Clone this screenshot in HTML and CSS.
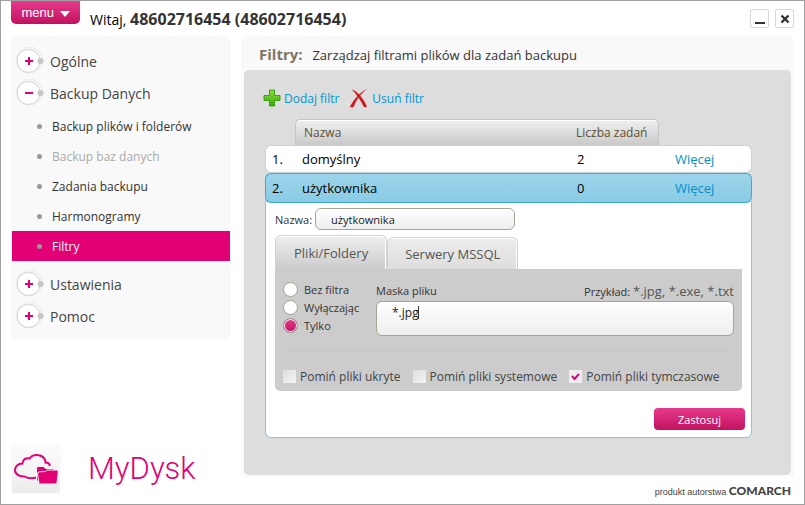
FILE: index.html
```html
<!DOCTYPE html>
<html lang="pl">
<head>
    <meta charset="UTF-8">
    <meta name="viewport" content="width=device-width, initial-scale=1.0">
    <title>MyDysk - Filtry</title>
    <link rel="stylesheet" href="styles.css">
</head>
<body>

    <div class="window">
        <header class="titlebar">
            <button type="button" class="menu-btn">menu
                <svg width="10" height="6" viewBox="0 0 10 6"><path d="M0 0h10L5 6z" fill="#fff"/></svg>
            </button>
            <p class="welcome">Witaj, <strong>48602716454 (48602716454)</strong></p>
            <div class="window-controls">
                <button type="button" aria-label="Minimalizuj">
                    <svg width="12" height="12" viewBox="0 0 12 12"><path d="M1 10h10" stroke="#333" stroke-width="2"/></svg>
                </button>
                <button type="button" aria-label="Zamknij">
                    <svg width="12" height="12" viewBox="0 0 12 12"><path d="M2.500 2.500l7 7M9.500 2.500l-7 7" stroke="#333" stroke-width="2.400"/></svg>
                </button>
            </div>
        </header>

        <div class="layout">
            <aside class="side">
                <nav class="sidebar">
                    <button type="button" class="group">
                        <svg class="knob" width="30" height="28" viewBox="0 0 30 28"><use href="#knob"/><path d="M10 14h8M14 10v8" stroke="#e20074" stroke-width="2"/></svg>
                        Ogólne
                    </button>
                    <button type="button" class="group" aria-expanded="true">
                        <svg class="knob" width="30" height="28" viewBox="0 0 30 28"><use href="#knob"/><path d="M10 14h8" stroke="#e20074" stroke-width="2"/></svg>
                        Backup Danych
                    </button>
                    <ul class="subnav">
                        <li><a href="#">Backup plików i folderów</a></li>
                        <li class="disabled"><a href="#">Backup baz danych</a></li>
                        <li><a href="#">Zadania backupu</a></li>
                        <li><a href="#">Harmonogramy</a></li>
                        <li class="active"><a href="#">Filtry</a></li>
                    </ul>
                    <button type="button" class="group">
                        <svg class="knob" width="30" height="28" viewBox="0 0 30 28"><use href="#knob"/><path d="M10 14h8M14 10v8" stroke="#e20074" stroke-width="2"/></svg>
                        Ustawienia
                    </button>
                    <button type="button" class="group">
                        <svg class="knob" width="30" height="28" viewBox="0 0 30 28"><use href="#knob"/><path d="M10 14h8M14 10v8" stroke="#e20074" stroke-width="2"/></svg>
                        Pomoc
                    </button>
                </nav>

                <div class="brand">
                    <span class="brand-tile">
                        <svg width="48" height="48" viewBox="0 0 48 48">
                            <path d="M25 32.500C20 33.800 16 33.500 12.500 31.500C7 32 3 29 3 25C3 21.500 6 18.500 10.500 18.500C10.500 14.500 14 12.500 17.500 13.500C19.500 10.500 24 9 28 10.500C32 12 33.500 14.500 33.500 17.500C36 17.500 37.500 18.500 38 21" fill="none" stroke="#e20074" stroke-width="2"/>
                            <path d="M24.500 36V23.500q0-2 2-2h5l2 2h7q2 0 2 2v2" fill="#e20074" stroke="#f4f4f4"/>
                            <path d="M27 38.500L25.500 29q0-2 2-2.200l6-.3 2-1.500h9q2 0 1.800 2l-1.300 10.500q-.3 1.500-2 1.500H28.500q-1.300 0-1.500-.5z" fill="#e20074" stroke="#f4f4f4"/>
                        </svg>
                    </span>
                    <span class="brand-name">MyDysk</span>
                </div>
            </aside>

            <main class="main">
                <section class="panel">
                    <h1 class="panel-title">Filtry: <span>Zarządzaj filtrami plików dla zadań backupu</span></h1>

                    <div class="panel-body">
                        <div class="toolbar">
                            <button type="button">
                                <svg width="18" height="18" viewBox="0 0 18 18">
                                    <defs><linearGradient id="green" x2="0" y2="1"><stop stop-color="#8fdc3c"/><stop offset="1" stop-color="#37a808"/></linearGradient></defs>
                                    <path d="M6.500 1h5v5.500H17v5h-5.500V17h-5v-5.500H1v-5h5.500z" fill="url(#green)" stroke="#3ba012"/>
                                </svg>
                                Dodaj filtr
                            </button>
                            <button type="button">
                                <svg width="20" height="20" viewBox="0 0 20 20"><path d="M3 1.500C8 3 15 11 18 18.500Q16 20 14.500 18.500C12 13 8 7 3 1.500zM19 .5C13 4 7 12 5 18.500Q3 20.500 1 18.500C5 11 11 4 19 .5z" fill="#cf1a1f"/></svg>
                                Usuń filtr
                            </button>
                        </div>

                        <table class="filters">
                            <colgroup><col class="col-no"><col><col class="col-count"><col class="col-more"></colgroup>
                            <thead>
                                <tr><td></td><th scope="col">Nazwa</th><th scope="col">Liczba zadań</th><td></td></tr>
                            </thead>
                            <tbody>
                                <tr><td>1.</td><td>domyślny</td><td>2</td><td><a href="#">Więcej</a></td></tr>
                                <tr class="selected"><td>2.</td><td>użytkownika</td><td>0</td><td><a href="#">Więcej</a></td></tr>
                            </tbody>
                        </table>

                        <form class="details">
                            <div class="name-row">
                                <label for="name">Nazwa:</label>
                                <input type="text" id="name" value="użytkownika">
                            </div>

                            <div class="tabs" role="tablist">
                                <button type="button" role="tab" class="tab current" aria-selected="true">Pliki/Foldery</button>
                                <button type="button" role="tab" class="tab" aria-selected="false">Serwery MSSQL</button>
                            </div>

                            <div class="tab-panel" role="tabpanel">
                                <div class="mask-row">
                                    <div class="modes">
                                        <label><input type="radio" name="mode"> Bez filtra</label>
                                        <label><input type="radio" name="mode"> Wyłączając</label>
                                        <label><input type="radio" name="mode" checked> Tylko</label>
                                    </div>
                                    <div class="mask">
                                        <div class="mask-head">
                                            <label for="mask">Maska pliku</label>
                                            <span>Przykład: <em>*.jpg, *.exe, *.txt</em></span>
                                        </div>
                                        <textarea id="mask" rows="1">*.jpg</textarea>
                                    </div>
                                </div>
                                <div class="options">
                                    <label><input type="checkbox"> Pomiń pliki ukryte</label>
                                    <label><input type="checkbox"> Pomiń pliki systemowe</label>
                                    <label><input type="checkbox" checked> Pomiń pliki tymczasowe</label>
                                </div>
                            </div>

                            <button type="submit" class="apply">Zastosuj</button>
                        </form>
                    </div>
                </section>

                <footer class="credits">produkt autorstwa <strong>COMARCH</strong></footer>
            </main>
        </div>
    </div>

    <!-- shared ring behind the plus/minus signs -->
    <svg class="symbols" width="0" height="0">
        <symbol id="knob" viewBox="0 0 30 28">
            <circle cx="14.500" cy="13" r="13" fill="#f6f6f6" stroke="#ececec"/>
            <circle cx="13.500" cy="14" r="11.500" fill="#fff" stroke="#d2d2d2"/>
            <circle cx="25.500" cy="14" r="3" fill="#c6c6c6"/>
        </symbol>
    </svg>

</body>
</html>
```

FILE: styles.css
```css
* {
    box-sizing: border-box;
}
body {
    margin: 0;
    font-family: "Open Sans", "Noto Sans", Tahoma, sans-serif;
    font-size: 13px;
    color: #333;
    background: #fff;
}
button, input, textarea {
    font: inherit;
    color: inherit;
}
button {
    border: 0;
    padding: 0;
    background: none;
    cursor: pointer;
}
a {
    text-decoration: none;
}
.symbols {
    position: absolute;
}
.window {
    display: flex;
    flex-direction: column;
    min-height: 100vh;
    border: 1px solid #a0a0a0;
    padding: 0 10px;
}

/* title bar */
.titlebar {
    display: flex;
    align-items: flex-start;
    height: 35px;
}
.menu-btn {
    width: 69px;
    height: 23px;
    border-radius: 0 0 5px 5px;
    background: linear-gradient(#e63a8e, #c2125f);
    color: #fff;
    font-family: "Liberation Sans", Arial, sans-serif;
    font-size: 13px;
}
.menu-btn svg {
    margin-left: 2px;
}
.welcome {
    flex: 1;
    margin: 7px 0 0 10px;
    font-size: 14px;
    line-height: 22px;
    color: #000;
}
.welcome strong {
    font-size: 16px;
    color: #333;
}
.window-controls {
    display: flex;
    gap: 6px;
    margin-top: 8px;
}
.window-controls button {
    display: flex;
    align-items: center;
    justify-content: center;
    width: 19px;
    height: 19px;
    border: 1px solid #d8d8d8;
    border-radius: 2px;
}

.layout {
    flex: 1;
    display: flex;
    gap: 10px;
}

/* left column */
.side {
    display: flex;
    flex-direction: column;
    justify-content: space-between;
    width: 220px;
}
.sidebar {
    padding: 9px 0 7px;
    border-radius: 5px;
    background: #f9f9f9;
}
.group {
    display: flex;
    align-items: center;
    gap: 5px;
    width: 100%;
    height: 32px;
    padding-left: 4px;
    font-size: 14px;
    color: #444;
}
.subnav {
    list-style: none;
    margin: 2px 1px 7px;
    padding: 0;
}
.subnav a {
    display: flex;
    align-items: center;
    height: 30px;
    padding-left: 25px;
    font-size: 12px;
    color: #333;
}
.subnav a::before {
    content: "";
    width: 5px;
    height: 5px;
    margin-right: 10px;
    border-radius: 50%;
    background: #999;
}
.subnav .disabled a {
    color: #aaa;
}
.subnav .active a {
    background: #e20074;
    color: #fff;
}
.brand {
    display: flex;
    align-items: center;
    gap: 28px;
    padding: 0 0 11px 1px;
}
.brand-tile {
    height: 48px;
    border-radius: 4px;
    background: linear-gradient(#fcfcfc, #ececec);
    box-shadow: 0 0 1px #ccc;
}
.brand-name {
    font-family: Roboto, Arial, sans-serif;
    font-size: 31px;
    font-weight: 300;
    line-height: 40px;
    color: #e20074;
}

/* right column */
.main {
    flex: 1;
    display: flex;
    flex-direction: column;
}
.panel {
    flex: 1;
    display: flex;
    flex-direction: column;
    padding: 0 3px 3px;
    border-radius: 5px;
    background: #f9f9f9;
}
.panel-title {
    margin: 0;
    padding: 4px 0 0 15px;
    font-size: 15px;
    line-height: 29px;
    color: #7d7762;
}
.panel-title span {
    margin-left: 6px;
    font-size: 13px;
    font-weight: normal;
    color: #333;
}
.panel-body {
    flex: 1;
    padding: 17px 39px 0 21px;
    border-radius: 5px;
    background: #ddd;
}
.toolbar {
    display: flex;
    gap: 10px;
    margin: 0 -2px 10px;
}
.toolbar button {
    display: flex;
    align-items: center;
    gap: 3px;
    height: 22px;
    font-size: 12px;
    color: #0095d3;
}

/* filter list */
.filters {
    width: 100%;
    table-layout: fixed;
    border-spacing: 0;
    position: relative;
    font-size: 13px;
    color: #000;
}
.col-no {
    width: 30px;
}
.col-count {
    width: 91px;
}
.col-more {
    width: 93px;
}
.filters th {
    height: 26px;
    padding: 0 8px;
    border-top: 1px solid #c4c4c4;
    background: linear-gradient(#fff 1px, #eee 1px, #c9c9c9);
    font-size: 12px;
    font-weight: normal;
    text-align: left;
    white-space: nowrap;
    color: #5c5235;
}
.filters th:nth-child(2) {
    border-left: 1px solid #c4c4c4;
    border-top-left-radius: 5px;
}
.filters th:nth-child(3) {
    border-right: 1px solid #c4c4c4;
    border-top-right-radius: 5px;
}
.filters thead td {
    padding: 0;
}
.filters tbody td {
    height: 28px;
    padding: 0 7px;
    border: 0 solid #c6d4d6;
    border-width: 1px 0;
    background: #fff;
}
.filters tbody td:nth-child(3) {
    padding-left: 9px;
}
.filters tbody td:last-child {
    padding-left: 16px;
    border-right-width: 1px;
    border-radius: 0 6px 6px 0;
}
.filters tbody td:first-child {
    padding-left: 6px;
    border-left-width: 1px;
    border-radius: 6px 0 0 6px;
}
.filters .selected td {
    height: 30px;
    border-color: #3fa9cf;
    background: linear-gradient(#9bd5eb, #8acbe5);
}
.filters a {
    color: #0090cc;
}

/* edit form under the selected row */
.details {
    display: flex;
    flex-direction: column;
    margin-top: -6px;
    padding: 10px 6px 7px 9px;
    border: 1px solid #8cc6de;
    border-radius: 6px;
    background: #fff;
    font-size: 12px;
}
.name-row {
    display: flex;
    align-items: center;
    gap: 3px;
}
.name-row label, .modes, .mask-head {
    font-size: 11px;
}
.name-row input {
    width: 200px;
    height: 22px;
    padding: 0 15px;
}
.name-row input, .mask textarea {
    border: 1px solid #a5a595;
    border-radius: 6px;
    background: linear-gradient(#fff, #eee);
    outline: none;
    font-size: 11px;
    color: #222;
}
.tabs {
    display: flex;
    align-items: flex-end;
    margin-top: 5px;
}
.tab {
    height: 32px;
    padding: 0 17px;
    border: 1px solid #d2d2d2;
    border-bottom: 0;
    border-radius: 6px 6px 0 0;
    background: linear-gradient(#ececec, #dedede);
    box-shadow: inset 0 1px #fff, inset -1px 0 #fff;
    font-size: 13px;
    color: #555;
}
.tab.current {
    height: 34px;
    padding: 0 18px;
    background: linear-gradient(#eee, #ccc);
}
.tab-panel {
    margin-right: 3px;
    padding: 11px 8px 6px;
    border-radius: 0 0 5px 5px;
    background: #ccc;
}
.mask-row {
    display: flex;
    gap: 20px;
    padding-bottom: 15px;
    border-bottom: 1px solid #c8c8c8;
}
.modes {
    display: flex;
    flex-direction: column;
    width: 73px;
}
.modes label {
    display: flex;
    align-items: center;
    gap: 6px;
    height: 18px;
}
.modes input {
    appearance: none;
    flex: none;
    width: 15px;
    height: 15px;
    margin: 0;
    border: 1px solid #a0a090;
    border-radius: 50%;
    background: #fff;
}
.modes input:checked {
    border-color: #999;
    background: linear-gradient(#e0408c, #c2125f);
    box-shadow: inset 0 0 0 1px #fff;
}
.mask {
    flex: 1;
}
.mask-head {
    display: flex;
    justify-content: space-between;
    align-items: center;
    height: 21px;
}
.mask-head em {
    font-size: 13px;
    font-style: normal;
    color: #555;
}
/* first background layer is the text caret */
.mask textarea {
    display: block;
    width: 100%;
    height: 35px;
    padding: 2px 15px;
    resize: none;
    background: linear-gradient(#333, #333) 41px 4px / 1px 13px no-repeat, linear-gradient(#fff, #eee);
    font-size: 12px;
}
.options {
    display: flex;
    gap: 12px;
    padding-top: 15px;
    white-space: nowrap;
    color: #444;
}
.options label {
    display: flex;
    align-items: center;
    gap: 4px;
    height: 18px;
}
.options input {
    appearance: none;
    width: 13px;
    height: 13px;
    margin: 0;
    background: linear-gradient(135deg, #ddd, #f4f4f4);
}
.options input:checked {
    background: #eee url("data:image/svg+xml,%3Csvg xmlns='http://www.w3.org/2000/svg' viewBox='0 0 13 13'%3E%3Cpath d='M3 6l2.500 3L10 4' fill='none' stroke='%23e20074' stroke-width='2'/%3E%3C/svg%3E");
}
.apply {
    align-self: flex-end;
    width: 91px;
    height: 22px;
    margin-top: 17px;
    border-radius: 4px;
    background: linear-gradient(#e63a8e, #c2125f);
    font-size: 11px;
    color: #fff;
}
.credits {
    padding: 5px 3px 4px;
    font-family: "Liberation Sans", Arial, sans-serif;
    font-size: 9px;
    line-height: 15px;
    text-align: right;
    color: #444;
}
.credits strong {
    font-family: Lato, sans-serif;
    font-size: 12px;
    font-weight: 900;
}
```
